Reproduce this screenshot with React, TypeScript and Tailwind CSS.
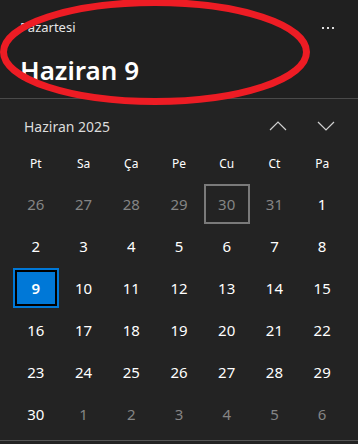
const weekdays = ["Pt", "Sa", "Ça", "Pe", "Cu", "Ct", "Pa"];

type Day = { n: number; muted?: boolean; today?: boolean; boxed?: boolean };

const days: Day[] = [
  ...[26, 27, 28, 29, 30, 31].map((n) => ({ n, muted: true, boxed: n === 30 })),
  ...Array.from({ length: 30 }, (_, i) => ({ n: i + 1, today: i + 1 === 9 })),
  ...[1, 2, 3, 4, 5, 6].map((n) => ({ n, muted: true })),
];

function DayCell({ d }: { d: Day }) {
  if (d.today) {
    return (
      <div className="flex items-center justify-center h-[42px]">
        <div className="w-[46px] h-[40px] border-2 border-[#0078d7] bg-black p-[2px]">
          <div className="w-full h-full bg-[#0078d7] flex items-center justify-center text-[15px] font-semibold text-white">
            {d.n}
          </div>
        </div>
      </div>
    );
  }
  return (
    <div className="flex items-center justify-center h-[42px]">
      <div
        className={
          "w-[46px] h-[40px] flex items-center justify-center text-[15px] " +
          (d.boxed ? "border-2 border-[#7a7a7a] " : "") +
          (d.muted ? "text-[#858585]" : "text-white")
        }
      >
        {d.n}
      </div>
    </div>
  );
}

function Chevron({ up }: { up?: boolean }) {
  return (
    <svg width="18" height="10" viewBox="0 0 18 10" fill="none" stroke="#d0d0d0" strokeWidth="1.2">
      <polyline points={up ? "1,9 9,1 17,9" : "1,1 9,9 17,1"} />
    </svg>
  );
}

export default function App() {
  return (
    <div
      className="relative w-[358px] h-[444px] overflow-hidden bg-[#232323] text-white"
      style={{ fontFamily: '"Segoe UI", "Noto Sans", sans-serif' }}
    >
      <div className="h-[98px] bg-[#202020] px-5 pt-[18px] flex flex-col">
        <div className="flex items-center justify-between">
          <span className="text-[13px] text-[#e6e6e6]">Pazartesi</span>
          <span className="flex gap-[3px] mr-[4px]">
            <i className="w-[2px] h-[2px] bg-[#ddd]" />
            <i className="w-[2px] h-[2px] bg-[#ddd]" />
            <i className="w-[2px] h-[2px] bg-[#ddd]" />
          </span>
        </div>
        <h1 className="mt-[19px] text-[26px] font-semibold leading-none">Haziran 9</h1>
      </div>
      <div className="h-px bg-[#4a4a4a]" />

      <div className="h-[54px] flex items-center justify-between pl-[24px] pr-[23px]">
        <span className="text-[14px] text-[#dcdcdc]">Haziran 2025</span>
        <div className="flex items-center gap-[30px]">
          <Chevron up />
          <Chevron />
        </div>
      </div>

      <div className="grid grid-cols-7 px-[12px] h-[22px] items-center text-[12px]">
        {weekdays.map((w) => (
          <div key={w} className="text-center">{w}</div>
        ))}
      </div>

      <div className="grid grid-cols-7 px-[12px] mt-[8px]">
        {days.map((d, i) => (
          <DayCell key={i} d={d} />
        ))}
      </div>

      <div className="mt-[5px] h-px bg-[#555]" />

      <svg className="absolute left-0 top-0 pointer-events-none" width="358" height="120">
        <ellipse cx="155" cy="52" rx="151.5" ry="49.5" fill="none" stroke="#ed1c24" strokeWidth="7" />
      </svg>
    </div>
  );
}
